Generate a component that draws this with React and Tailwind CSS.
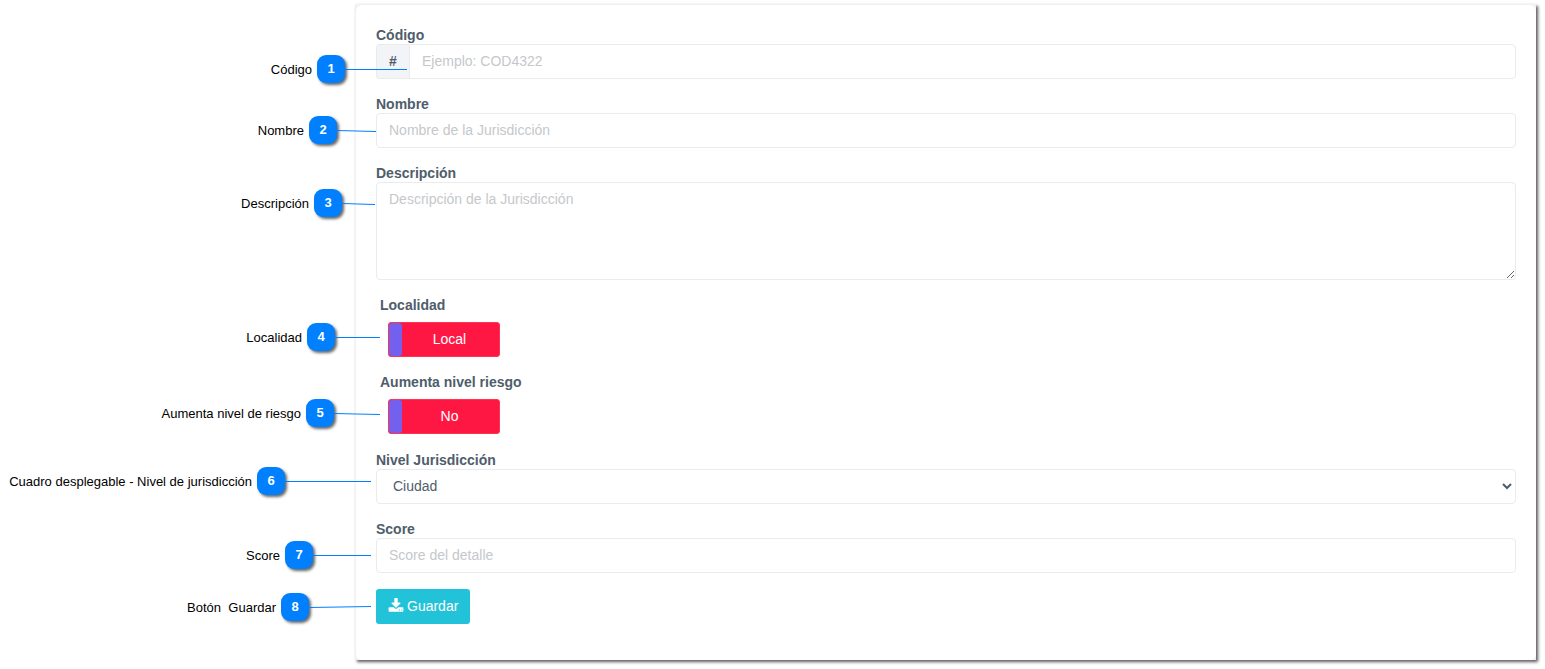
import { useState } from 'react';

const CALLOUTS = [
  { n: 1, text: 'Código', row: 'mt-[55px] -mr-[52px]', length: 62, drop: 0 },
  { n: 2, text: 'Nombre', row: 'mt-[33px] -mr-[21px]', length: 39, drop: 1 },
  { n: 3, text: 'Descripción', row: 'mt-[45px] -mr-[20px]', length: 33, drop: 1 },
  { n: 4, text: 'Localidad', row: 'mt-[106px] -mr-[25px]', length: 45, drop: 0 },
  { n: 5, text: 'Aumenta nivel de riesgo', row: 'mt-[48px] -mr-[25px]', length: 46, drop: 1 },
  { n: 6, text: 'Cuadro desplegable - Nivel de jurisdicción', row: 'mt-[40px] -mr-[16px]', length: 86, drop: 0 },
  { n: 7, text: 'Score', row: 'mt-[46px] -mr-[16px]', length: 58, drop: 0 },
  { n: 8, text: 'Botón  Guardar', row: 'mt-[24px] -mr-[16px]', length: 62, drop: -1 },
];

const labelClass = 'block text-sm leading-[18px] font-bold text-[#4f5d6b]';
const inputClass =
  'block h-[35px] w-full rounded border border-[#e9ebed] bg-white px-3 text-sm text-[#4f5d6b] placeholder:text-[#c5c8cb] outline-none focus:border-[#0080ff]';

function DownloadIcon() {
  return (
    <svg width="16" height="16" viewBox="0 0 1792 1792" fill="currentColor" aria-hidden="true">
      <path d="M1344 1344q0-26-19-45t-45-19-45 19-19 45 19 45 45 19 45-19 19-45zm256 0q0-26-19-45t-45-19-45 19-19 45 19 45 45 19 45-19 19-45zm128-224v320q0 40-28 68t-68 28h-1472q-40 0-68-28t-28-68v-320q0-40 28-68t68-28h465l135 136q58 56 136 56t136-56l136-136h464q40 0 68 28t28 68zm-325-569q17 41-14 70l-448 448q-18 19-45 19t-45-19l-448-448q-31-29-14-70 17-39 59-39h256v-448q0-26 19-45t45-19h256q26 0 45 19t19 45v448h256q42 0 59 39z" />
    </svg>
  );
}

function Callout({ n, text, row, length, drop }) {
  return (
    <li className={`flex h-7 items-center justify-end ${row}`}>
      <span className="pt-0.5 text-[13px] leading-4 whitespace-pre text-black">{text}</span>
      <span className="ml-[5px] flex size-7 items-center justify-center rounded-[9px] bg-[#0080ff] text-[13px] font-bold text-white shadow-[2px_2px_3px_rgba(0,0,0,0.6)]">
        {n}
      </span>
      <svg width={length} height="5" viewBox={`0 0 ${length} 5`} aria-hidden="true">
        <line x1="0" y1="2.5" x2={length} y2={2.5 + drop} stroke="#0080ff" />
      </svg>
    </li>
  );
}

function Field({ id, label, children }) {
  return (
    <div className="mb-4">
      <label htmlFor={id} className={labelClass}>{label}</label>
      {children}
    </div>
  );
}

function Toggle({ id, label, on, off }) {
  const [checked, setChecked] = useState(false);

  return (
    <div className="mb-4 pl-1">
      <label htmlFor={id} className={labelClass}>{label}</label>
      <label className="mt-2 ml-2 flex h-[35px] w-28 cursor-pointer overflow-hidden rounded-[3px] border border-[#fd3550] bg-[#ff1744] text-sm text-white">
        <input
          id={id}
          type="checkbox"
          className="sr-only"
          checked={checked}
          onChange={(e) => setChecked(e.target.checked)}
        />
        <span className={`w-[13px] rounded-[3px] bg-[#7460ee] ${checked ? 'order-2' : ''}`} />
        <span className="flex flex-1 items-center justify-center pr-0.5 pb-px">{checked ? on : off}</span>
      </label>
    </div>
  );
}

export default function App() {
  return (
    <div className="flex items-start bg-white pb-[9px] font-['Liberation_Sans',Arial,sans-serif]">
      <ol className="pointer-events-none relative z-10 w-[355px] shrink-0">
        {CALLOUTS.map((c) => (
          <Callout key={c.n} {...c} />
        ))}
      </ol>

      <main className="mt-1 mr-[9px] min-w-0 flex-1 bg-[#eef2f5] pt-px pl-px shadow-[2px_2px_3px_rgba(0,0,0,0.65)]">
        <form className="rounded-md bg-white px-5 pt-[21px] pb-9" onSubmit={(e) => e.preventDefault()}>
          <Field id="codigo" label="Código">
            <div className="flex">
              <span className="flex w-[33px] shrink-0 items-center justify-center rounded-l border border-r-0 border-[#e9ebed] bg-[#f2f4f8] pb-px text-sm font-bold text-[#4f5d6b]">
                #
              </span>
              <input id="codigo" type="text" placeholder="Ejemplo: COD4322" className={`${inputClass} rounded-l-none pb-0.5`} />
            </div>
          </Field>

          <Field id="nombre" label="Nombre">
            <input id="nombre" type="text" placeholder="Nombre de la Jurisdicción" className={`${inputClass} pb-0.5`} />
          </Field>

          <Field id="descripcion" label="Descripción">
            <textarea
              id="descripcion"
              placeholder="Descripción de la Jurisdicción"
              className={`${inputClass} h-[98px] resize py-1.5 leading-[21px]`}
            />
          </Field>

          <div className="pb-px">
            <Toggle id="localidad" label="Localidad" on="Internacional" off="Local" />
            <Toggle id="riesgo" label="Aumenta nivel riesgo" on="Sí" off="No" />
          </div>

          <Field id="nivel" label="Nivel Jurisdicción">
            <select id="nivel" defaultValue="ciudad" className={`${inputClass} pb-0.5`}>
              <option value="ciudad">Ciudad</option>
              <option value="provincia">Provincia</option>
              <option value="pais">País</option>
            </select>
          </Field>

          <Field id="score" label="Score">
            <input id="score" type="text" placeholder="Score del detalle" className={`${inputClass} pb-0.5`} />
          </Field>

          <button
            type="submit"
            className="flex h-[35px] cursor-pointer items-center gap-[3px] rounded-[3px] bg-[#22c2d8] px-3 pb-px text-sm text-white"
          >
            <DownloadIcon />
            Guardar
          </button>
        </form>
      </main>
    </div>
  );
}
